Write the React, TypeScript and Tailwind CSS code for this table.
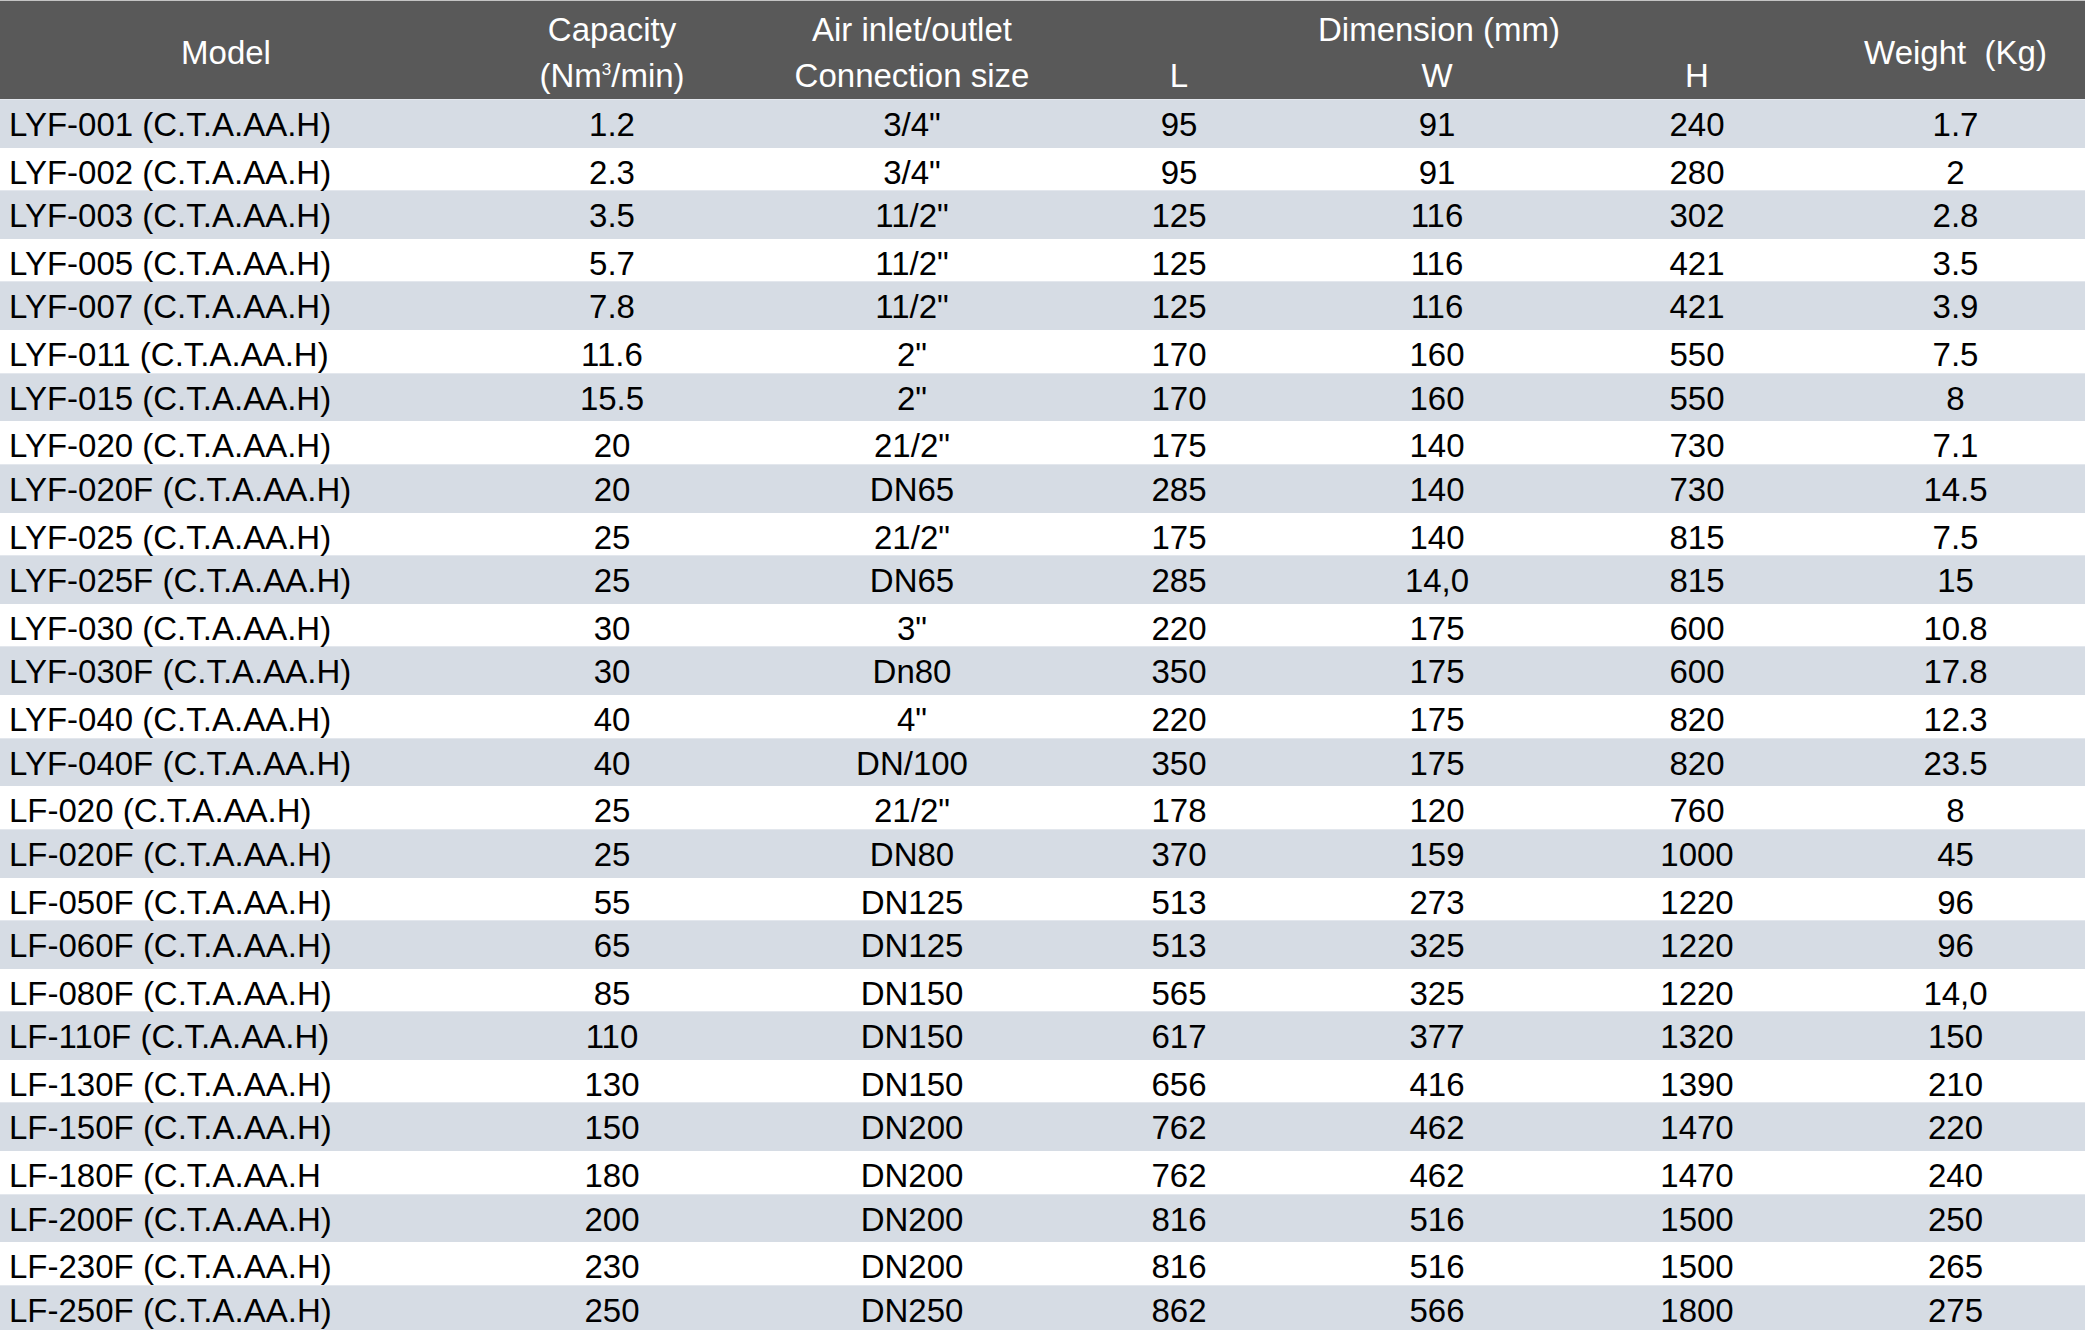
const rows: string[][] = [
  ['LYF-001 (C.T.A.AA.H)', '1.2', '3/4"', '95', '91', '240', '1.7'],
  ['LYF-002 (C.T.A.AA.H)', '2.3', '3/4"', '95', '91', '280', '2'],
  ['LYF-003 (C.T.A.AA.H)', '3.5', '11/2"', '125', '116', '302', '2.8'],
  ['LYF-005 (C.T.A.AA.H)', '5.7', '11/2"', '125', '116', '421', '3.5'],
  ['LYF-007 (C.T.A.AA.H)', '7.8', '11/2"', '125', '116', '421', '3.9'],
  ['LYF-011 (C.T.A.AA.H)', '11.6', '2"', '170', '160', '550', '7.5'],
  ['LYF-015 (C.T.A.AA.H)', '15.5', '2"', '170', '160', '550', '8'],
  ['LYF-020 (C.T.A.AA.H)', '20', '21/2"', '175', '140', '730', '7.1'],
  ['LYF-020F (C.T.A.AA.H)', '20', 'DN65', '285', '140', '730', '14.5'],
  ['LYF-025 (C.T.A.AA.H)', '25', '21/2"', '175', '140', '815', '7.5'],
  ['LYF-025F (C.T.A.AA.H)', '25', 'DN65', '285', '14,0', '815', '15'],
  ['LYF-030 (C.T.A.AA.H)', '30', '3"', '220', '175', '600', '10.8'],
  ['LYF-030F (C.T.A.AA.H)', '30', 'Dn80', '350', '175', '600', '17.8'],
  ['LYF-040 (C.T.A.AA.H)', '40', '4"', '220', '175', '820', '12.3'],
  ['LYF-040F (C.T.A.AA.H)', '40', 'DN/100', '350', '175', '820', '23.5'],
  ['LF-020 (C.T.A.AA.H)', '25', '21/2"', '178', '120', '760', '8'],
  ['LF-020F (C.T.A.AA.H)', '25', 'DN80', '370', '159', '1000', '45'],
  ['LF-050F (C.T.A.AA.H)', '55', 'DN125', '513', '273', '1220', '96'],
  ['LF-060F (C.T.A.AA.H)', '65', 'DN125', '513', '325', '1220', '96'],
  ['LF-080F (C.T.A.AA.H)', '85', 'DN150', '565', '325', '1220', '14,0'],
  ['LF-110F (C.T.A.AA.H)', '110', 'DN150', '617', '377', '1320', '150'],
  ['LF-130F (C.T.A.AA.H)', '130', 'DN150', '656', '416', '1390', '210'],
  ['LF-150F (C.T.A.AA.H)', '150', 'DN200', '762', '462', '1470', '220'],
  ['LF-180F (C.T.A.AA.H', '180', 'DN200', '762', '462', '1470', '240'],
  ['LF-200F (C.T.A.AA.H)', '200', 'DN200', '816', '516', '1500', '250'],
  ['LF-230F (C.T.A.AA.H)', '230', 'DN200', '816', '516', '1500', '265'],
  ['LF-250F (C.T.A.AA.H)', '250', 'DN250', '862', '566', '1800', '275'],
]

const cols = 'grid grid-cols-[452px_320px_280px_254px_262px_258px_259px]'

const rowClass = (i: number) => {
  if (i === rows.length - 1) {
    return `${cols} h-[45px] bg-[#d6dce4] border-t border-[#e3e7ed] text-black`
  }
  return i % 2 === 0
    ? `${cols} h-[48.8px] bg-[#d6dce4] border-t border-[#e3e7ed] text-black`
    : `${cols} h-[42.43px] bg-white text-black`
}

const App = () => {
  return (
    <div className="w-[2085px] h-[1336px] overflow-hidden bg-white font-[family-name:'Liberation_Sans',Arial,sans-serif] text-[33px]">
      {/* header */}
      <div
        className={`${cols} grid-rows-[46px_46px] h-[99px] pt-[6px] border-t border-[#c4c4c4] bg-[#595959] text-white leading-[46px]`}
      >
        <div className="row-span-2 flex items-center justify-center">Model</div>
        <div className="row-span-2 flex flex-col items-center justify-center">
          <span>Capacity</span>
          <span>
            (Nm<span className="relative -top-[12px] text-[17px] leading-none">3</span>/min)
          </span>
        </div>
        <div className="row-span-2 flex flex-col items-center justify-center">
          <span>Air inlet/outlet</span>
          <span>Connection size</span>
        </div>
        <div className="col-span-3 flex items-center justify-center">Dimension (mm)</div>
        <div className="row-span-2 col-start-7 row-start-1 flex items-center justify-center whitespace-pre">
          Weight  (Kg)
        </div>
        <div className="col-start-4 row-start-2 flex items-center justify-center">L</div>
        <div className="col-start-5 row-start-2 flex items-center justify-center">W</div>
        <div className="col-start-6 row-start-2 flex items-center justify-center">H</div>
      </div>

      {/* body */}
      {rows.map((r, i) => (
        <div key={i} className={rowClass(i)}>
          <div className="flex items-center pl-[9px] pb-[2px] whitespace-nowrap">{r[0]}</div>
          {r.slice(1).map((v, j) => (
            <div key={j} className="flex items-center justify-center pb-[2px] whitespace-nowrap">
              {v}
            </div>
          ))}
        </div>
      ))}
    </div>
  )
}

export default App
